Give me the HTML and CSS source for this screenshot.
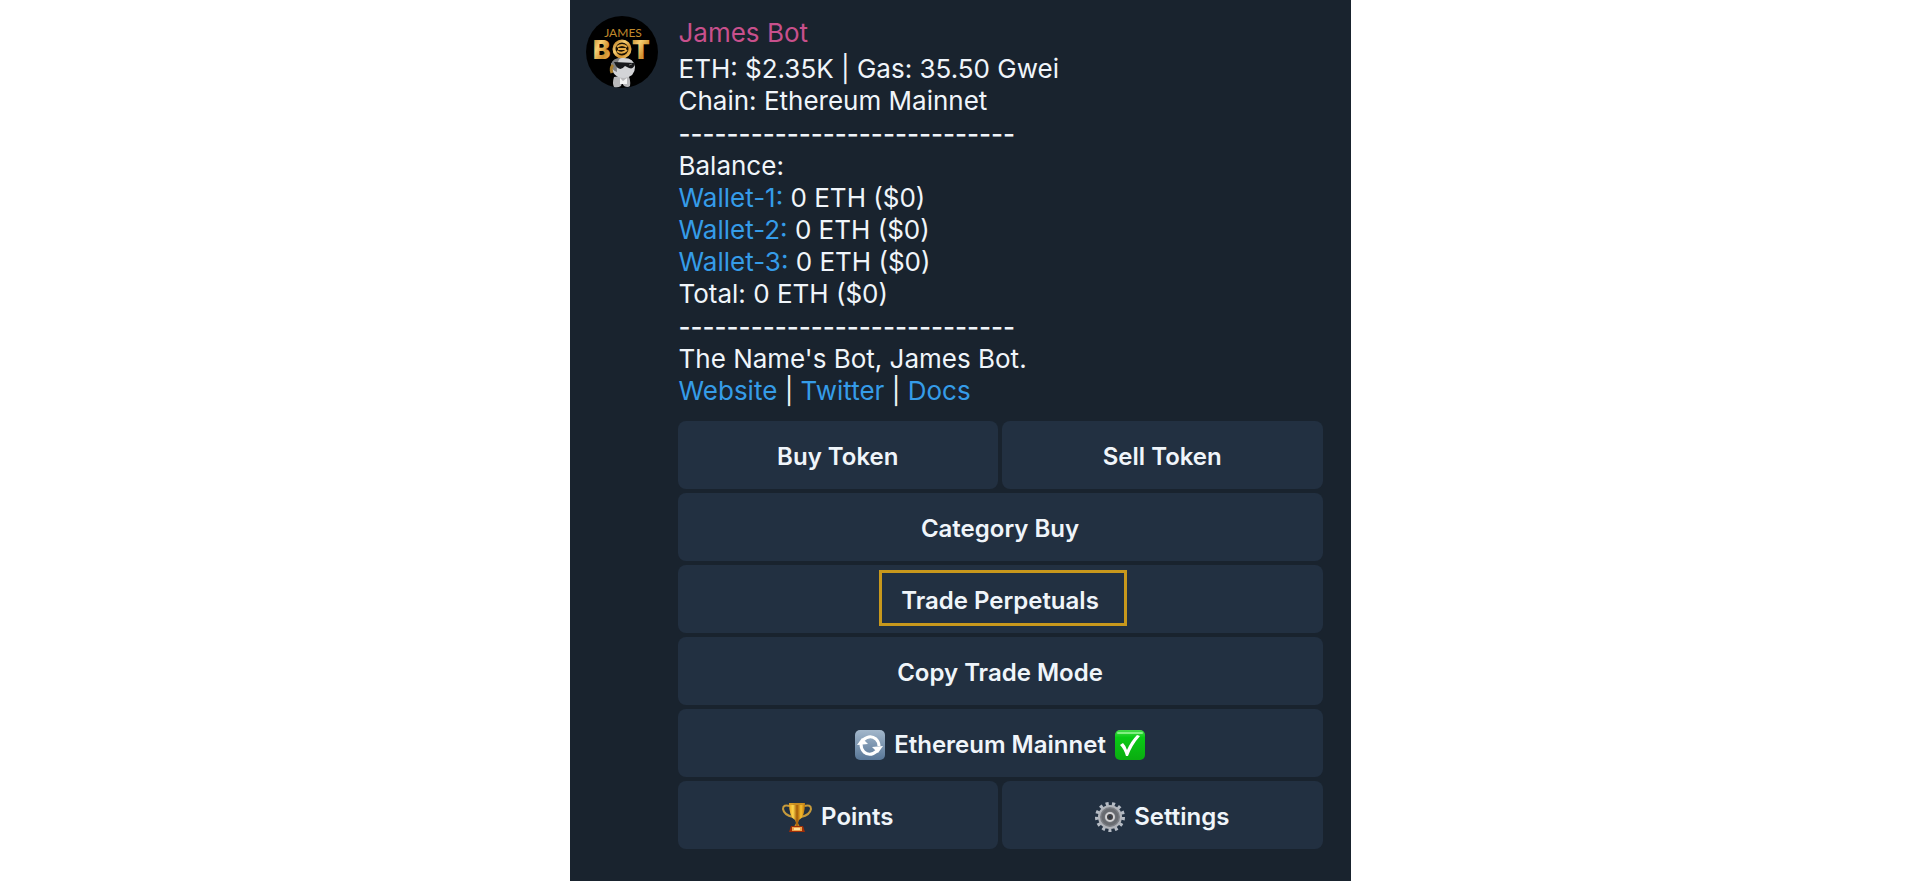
FILE: index.html
```html
<!DOCTYPE html>
<html lang="en">
<head>
    <meta charset="UTF-8">
    <meta name="viewport" content="width=device-width, initial-scale=1.0">
    <title>James Bot</title>
    <link rel="stylesheet" href="styles.css">
</head>
<body>
    <main class="chat">
        <div class="avatar">
            <svg viewBox="0 0 72 72" aria-hidden="true">
                <defs>
                    <linearGradient id="gold" x1="0" y1="0" x2="1" y2="1">
                        <stop offset="0" stop-color="#b9791f"/>
                        <stop offset="0.35" stop-color="#f8cf72"/>
                        <stop offset="0.65" stop-color="#d08f2e"/>
                        <stop offset="1" stop-color="#f5c869"/>
                    </linearGradient>
                </defs>
                <circle cx="36" cy="36" r="36" fill="#000"/>
                <text class="logo-small" x="37" y="21" text-anchor="middle" fill="#c08a2c">JAMES</text>
                <text class="logo-big" x="7" y="43" fill="url(#gold)">B</text>
                <text class="logo-big" x="46" y="43" fill="url(#gold)">T</text>
                <circle cx="36" cy="33" r="8" fill="#1b1204" stroke="url(#gold)" stroke-width="3"/>
                <path d="M31 31q5-4 10 0M31 35q5 4 10-1M32 33h8" fill="none" stroke="#e5aa45" stroke-width="2"/>
                <path d="M28 61q-2 6 0 10q4 1 7-1l1-3l2 3q4 2 6 0q1-6-2-11z" fill="#b9b9bb"/>
                <path d="M34 62l3 3l4-3v6h-7z" fill="#f4f4f4"/>
                <path d="M25 48q4-7 13-6q10 0 11 9q0 10-11 11q-12 0-13-14z" fill="#d3d4d7"/>
                <path d="M25 48q2-6 9-6q-4 6-3 14q-6-2-6-8z" fill="#7f8082"/>
                <path d="M27 49q-3 3-1 8" fill="none" stroke="#a77d2d" stroke-width="3"/>
                <path d="M28 46l21 1q-1 7-6 5l-4-2q-5 6-9 0z" fill="#17181b"/>
                <path d="M43 49l3-1" stroke="#777" stroke-width="1"/>
            </svg>
        </div>

        <div class="message">
            <h1>James Bot</h1>
            <div class="text">
                <div>ETH: $2.35K | Gas: 35.50 Gwei</div>
                <div>Chain: Ethereum Mainnet</div>
                <div class="divider">----------------------------</div>
                <div>Balance:</div>
                <div><a href="#wallet-1">Wallet-1:</a> 0 ETH ($0)</div>
                <div><a href="#wallet-2">Wallet-2:</a> 0 ETH ($0)</div>
                <div><a href="#wallet-3">Wallet-3:</a> 0 ETH ($0)</div>
                <div>Total: 0 ETH ($0)</div>
                <div class="divider">----------------------------</div>
                <div>The Name's Bot, James Bot.</div>
                <div><a href="#website">Website</a> | <a href="#twitter">Twitter</a> | <a href="#docs">Docs</a></div>
            </div>

            <div class="keyboard">
                <button type="button">Buy Token</button>
                <button type="button">Sell Token</button>
                <button type="button" class="wide">Category Buy</button>
                <button type="button" class="wide"><span class="marked">Trade Perpetuals</span></button>
                <button type="button" class="wide">Copy Trade Mode</button>
                <button type="button" class="wide">
                    <svg class="emoji" viewBox="0 0 30 30" aria-hidden="true">
                        <defs>
                            <linearGradient id="blue" x1="0" y1="0" x2="0" y2="1">
                                <stop offset="0" stop-color="#a3b7cb"/>
                                <stop offset="1" stop-color="#587697"/>
                            </linearGradient>
                        </defs>
                        <rect x="0" y="0" width="30" height="30" rx="5" fill="url(#blue)"/>
                        <path d="M8 10Q15 4 21 9Q24 12 24 16" fill="none" stroke="#fff" stroke-width="3"/>
                        <path d="M22 21Q15 27 9 22Q6 19 6 14" fill="none" stroke="#fff" stroke-width="3"/>
                        <path d="M2 15L7 8L13 14z" fill="#fff"/>
                        <path d="M17 17L28 16L23 23z" fill="#fff"/>
                    </svg>
                    Ethereum Mainnet
                    <svg class="emoji" viewBox="0 0 30 30" aria-hidden="true">
                        <defs>
                            <linearGradient id="green" x1="0" y1="0" x2="0" y2="1">
                                <stop offset="0" stop-color="#45dc4a"/>
                                <stop offset="0.25" stop-color="#09c915"/>
                                <stop offset="1" stop-color="#0aac10"/>
                            </linearGradient>
                        </defs>
                        <rect x="0" y="0" width="30" height="30" rx="5" fill="url(#green)"/>
                        <path d="M3 3h24" stroke="#82ef82" stroke-width="2" stroke-linecap="round"/>
                        <path d="M5 15l3-2q3 3 4 7Q16 11 22 5l3 1Q17 15 13 26h-2Q9 19 5 15z" fill="#fff"/>
                    </svg>
                </button>
                <button type="button">
                    <svg class="emoji" viewBox="0 0 30 30" aria-hidden="true">
                        <defs>
                            <linearGradient id="cup" x1="0" y1="0" x2="1" y2="0">
                                <stop offset="0" stop-color="#e9a21c"/>
                                <stop offset="0.25" stop-color="#ffd84d"/>
                                <stop offset="0.5" stop-color="#a35a07"/>
                                <stop offset="0.75" stop-color="#f6bd2c"/>
                                <stop offset="1" stop-color="#b87008"/>
                            </linearGradient>
                        </defs>
                        <path d="M8 4Q1 2 1 7Q2 13 11 15M22 4Q29 2 29 7Q28 13 19 15" fill="none" stroke="#c69a3c" stroke-width="2"/>
                        <path d="M7 1H23Q23 15 17 18L16 21L18 25H12L14 21L13 18Q7 15 7 1z" fill="url(#cup)"/>
                        <ellipse cx="15" cy="2" rx="8" ry="1" fill="#c98c20"/>
                        <path d="M9 24H21L23 30H7z" fill="#9c2d08"/>
                        <path d="M10 25H20V29H10z" fill="#efa44c"/>
                        <path d="M12 27H18" stroke="#ffe2a0" stroke-width="2"/>
                    </svg>
                    Points
                </button>
                <button type="button">
                    <svg class="emoji" viewBox="0 0 30 30" aria-hidden="true">
                        <circle cx="15" cy="15" r="13" fill="none" stroke="#b5bbc4" stroke-width="4" stroke-dasharray="3 3.283"/>
                        <circle cx="15" cy="15" r="11" fill="#7b7e84" stroke="#b1b4ba" stroke-width="2"/>
                        <circle cx="15" cy="15" r="7" fill="none" stroke="#686b70" stroke-width="3"/>
                        <circle cx="15" cy="15" r="4" fill="#3f3f42" stroke="#d2d2d4" stroke-width="2"/>
                        <circle cx="15" cy="15" r="1" fill="#22344a"/>
                    </svg>
                    Settings
                </button>
            </div>
        </div>
    </main>
</body>
</html>
```

FILE: styles.css
```css
body {
    margin: 0;
    background-color: #fff;
    color: #f0f5fa;
    font-family: Inter, "Liberation Sans", sans-serif;
    font-size: 26px;
    line-height: 32px;
}

.chat {
    display: flex;
    gap: 20px;
    box-sizing: border-box;
    max-width: 781px;
    min-height: 100vh;
    margin: 0 auto;
    padding: 16px 28px 28px 16px;
    background-color: #19232e;
}

.avatar {
    flex: none;
    width: 72px;
    height: 72px;
}

.avatar svg {
    display: block;
}

.logo-small {
    font-family: Lato, sans-serif;
    font-size: 12px;
}

.logo-big {
    font-family: Inter, sans-serif;
    font-size: 26px;
    font-weight: 900;
}

.message {
    flex: 1;
    min-width: 0;
}

h1 {
    margin: 0;
    padding: 1px 1px 4px;
    color: #c8508c;
    font-size: 26px;
    font-weight: 400;
}

.text {
    padding: 0 1px;
}

.divider {
    font-weight: 500;
    line-height: 33px;
}

a {
    color: #359ce8;
    text-decoration: none;
}

a:hover {
    text-decoration: underline;
}

.keyboard {
    display: grid;
    grid-template-columns: 1fr 1fr;
    gap: 4px;
    margin-top: 14px;
}

button {
    display: flex;
    align-items: center;
    justify-content: center;
    gap: 9px;
    height: 68px;
    padding: 3px 0 0;
    border: none;
    border-radius: 8px;
    background-color: #223041;
    color: #f0f5fa;
    font-family: inherit;
    font-size: 24px;
    font-weight: 600;
    cursor: pointer;
}

button:hover {
    background-color: #2a394c;
}

.wide {
    grid-column: span 2;
}

.marked {
    position: relative;
}

/* gold frame around the highlighted action */
.marked::after {
    content: "";
    position: absolute;
    inset: -16px -28px -11px -22px;
    border: 3px solid #c8981c;
}

.emoji {
    flex: none;
    width: 30px;
    height: 30px;
}
```
